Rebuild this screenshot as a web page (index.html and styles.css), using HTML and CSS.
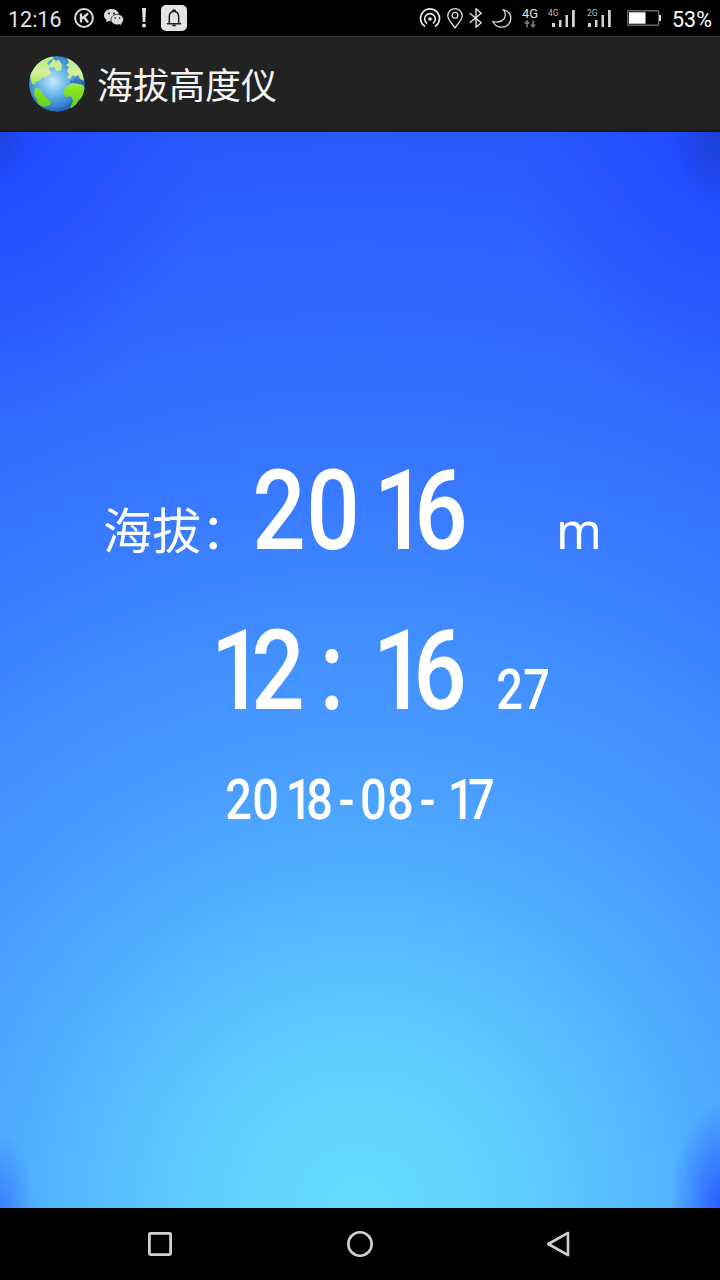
FILE: index.html
```html
<!DOCTYPE html>
<html lang="zh-CN">

<head>
    <meta charset="UTF-8">
    <meta name="viewport" content="width=device-width, initial-scale=1.0">
    <title>海拔高度仪</title>
    <link rel="stylesheet" href="styles.css">
</head>

<body>
    <div class="status">
        <span class="clock">12:16</span>
        <svg class="ic-k" width="20" height="20" viewBox="0 0 20 20" fill="none" stroke="#d8d8d8">
            <circle cx="10" cy="10" r="8.9" stroke-width="2" />
            <path d="M7 5.5v9M14 5.5L8 10.5M10 9l4 5.5" stroke-width="2.4" />
        </svg>
        <svg class="ic-chat" width="20" height="18" viewBox="0 0 20 18">
            <path d="M7.5 0C3.400 0 0 2.700 0 6.200c0 2 1 3.700 2.700 4.800L2 13.300l2.700-1.400c.9.300 1.800.4 2.800.4 4.200 0 7.500-2.700 7.500-6.100S11.700 0 7.500 0z" fill="#dcdcdc" />
            <path d="M13.300 5.300c-3.600 0-6.300 2.400-6.300 5.300s2.700 5.300 6.300 5.300c.8 0 1.500-.1 2.200-.3l2.300 1.300-.6-2c1.400-1 2.300-2.500 2.300-4.300 0-2.900-2.600-5.300-6.200-5.300z" fill="#dcdcdc" stroke="#000" stroke-width=".7" />
            <g fill="#000">
                <circle cx="5" cy="4.500" r=".9" />
                <circle cx="10" cy="4.500" r=".9" />
                <circle cx="11.200" cy="9" r=".8" />
                <circle cx="15.500" cy="9" r=".8" />
            </g>
        </svg>
        <svg class="ic-alert" width="6" height="20" viewBox="0 0 6 20" fill="#e4e4e4">
            <path d="M1 0h4l-.7 14H1.700z" />
            <circle cx="3" cy="17.500" r="2" />
        </svg>
        <svg class="ic-bell" width="26" height="26" viewBox="0 0 26 26">
            <rect width="26" height="26" rx="5" fill="#e4e4e4" />
            <path d="M6.500 18.800h13M8.300 18.500V12c0-3.800 1.900-5.500 4.700-5.500s4.700 1.700 4.700 5.500v6.500M11.500 6.300c0-1.600 3-1.600 3 0M11.800 20.500h2.400" fill="none" stroke="#222" stroke-width="1.500" stroke-linecap="round" />
        </svg>

        <svg class="ic-hotspot" width="22" height="20" viewBox="0 0 22 20" fill="none" stroke="#e6e6e6" stroke-width="1.600">
            <circle cx="11" cy="11" r="1.800" fill="#e6e6e6" stroke="none" />
            <path d="M8 15.500a5.400 5.400 0 1 1 6 0M6 18.500a9.500 9.500 0 1 1 10 0" />
        </svg>
        <svg class="ic-pin" width="16" height="21" viewBox="0 0 16 21" fill="none" stroke="#dedede" stroke-width="1.300">
            <path d="M8 19.800C5 15.500.8 11.500.8 7.700a7.200 7 0 0 1 14.400 0C15.200 11.500 11 15.500 8 19.800z" />
            <circle cx="8" cy="7.200" r="2.900" />
        </svg>
        <svg class="ic-bt" width="14" height="20" viewBox="0 0 14 20" fill="none" stroke="#e0e0e0" stroke-width="1.400">
            <path d="M.8 5.200l11.400 9.600L7 19.200V.8l5.200 4.400L.8 14.800" />
        </svg>
        <svg class="ic-moon" width="20" height="19" viewBox="0 0 20 19" fill="none" stroke="#dcdcdc" stroke-width="1.300">
            <path d="M11.500.9c4.500 1 7.300 4.500 7.300 8.600 0 5-4 8.700-9 8.700-4 0-7.500-2.200-8.800-5.700 6 1.900 12.700-1 12.200-7.500C13.100 3.500 12.500 2.200 11.500.9z" />
        </svg>
        <div class="net">
            <span>4G</span>
            <svg width="12" height="8" viewBox="0 0 12 8" fill="none" stroke="#777" stroke-width="1.600">
                <path d="M3 7.500V1.500M.8 3.500L3 1.200l2.200 2.300M9 .5v6M6.800 4.500L9 6.800l2.200-2.300" />
            </svg>
        </div>
        <div class="signal">
            <span>4G</span>
            <svg width="23" height="18" viewBox="0 0 23 18" fill="#d0d0d0">
                <path d="M0 14h3v4H0zM7 11h2.500v7H7zM13.500 6H16v12h-2.500zM20 1h2.800v17H20z" />
            </svg>
        </div>
        <div class="signal second">
            <span>2G</span>
            <svg width="23" height="18" viewBox="0 0 23 18" fill="#d0d0d0">
                <path d="M0 14h3v4H0zM7 11h2.500v7H7zM13.500 6H16v12h-2.500zM20 1h2.800v17H20z" />
            </svg>
        </div>
        <svg class="ic-battery" width="34" height="16" viewBox="0 0 34 16">
            <rect x=".7" y=".7" width="31" height="14.600" rx="1" fill="none" stroke="#666" stroke-width="1.400" />
            <rect x="2" y="2.300" width="16.500" height="11.400" fill="#fff" />
            <rect x="32" y="5" width="2" height="6" fill="#ddd" />
        </svg>
        <span class="percent">53%</span>
    </div>

    <div class="header">
        <svg class="globe" width="56" height="56" viewBox="0 0 56 56">
            <defs>
                <radialGradient id="sea" cx="43%" cy="45%" r="60%">
                    <stop offset="0" stop-color="#c5e8fa" />
                    <stop offset=".4" stop-color="#6db9ed" />
                    <stop offset=".75" stop-color="#3a85cf" />
                    <stop offset="1" stop-color="#1450a4" />
                </radialGradient>
                <linearGradient id="land" x1="0" y1="0" x2="0" y2="56" gradientUnits="userSpaceOnUse">
                    <stop offset="0" stop-color="#b9ee7c" />
                    <stop offset=".3" stop-color="#d5f0a0" />
                    <stop offset=".6" stop-color="#86e324" />
                    <stop offset="1" stop-color="#60ce10" />
                </linearGradient>
                <clipPath id="ball">
                    <circle cx="28" cy="28" r="28" />
                </clipPath>
            </defs>
            <g clip-path="url(#ball)">
                <circle cx="28" cy="28" r="28" fill="url(#sea)" />
                <g fill="url(#land)">
                    <path d="M3 28L0 16 10 4 22 0l3 2-5 3-2 3 3 2-1 4 3 3-4 3-3 2-2-1-4 4-3 1-1 3-2-1z" />
                    <path d="M24 3l3 2 3-1 3 5-1 5-4 1-3-4-3 1-2-4 2-1z" />
                    <path d="M38 2c7 3 12 8 15 14l2 9-4-2-2-4-3 2-2-2-3 4-3-1 2-4-2-3 2-4-3-2 3-2z" />
                    <path d="M6 32l6 1 2 6 8 7-1 3-6 2-6-3-1-5-3-4z" />
                    <path d="M38 30l5-3 6 1 5 1 2 3-2 9-5 4-3 6-4 2-1-1 3-7-2-5-5 1-3-4 1-4z" />
                </g>
                <path d="M41 24l3 1 3-3 2 3 5 1-2 2-4-1-6 0z" fill="#3374b8" />
            </g>
        </svg>
        <h1>海拔高度仪</h1>
    </div>

    <div class="main">
        <div class="row altitude">
            <span class="label">海拔：</span>
            <div class="digits">
                <span>2</span><span>0</span><span class="one">1</span><span>6</span>
            </div>
            <span class="unit">m</span>
        </div>
        <div class="row time">
            <div class="digits">
                <span class="one">1</span><span>2</span><span class="colon">:</span><span class="one">1</span><span>6</span>
            </div>
            <div class="digits small">
                <span>2</span><span>7</span>
            </div>
        </div>
        <div class="row date">
            <div class="digits small">
                <span>2</span><span>0</span><span class="one">1</span><span>8</span><span class="dash">-</span><span>0</span><span>8</span><span class="dash">-</span><span class="one">1</span><span>7</span>
            </div>
        </div>
    </div>

    <div class="nav">
        <svg width="28" height="28" viewBox="0 0 28 28" fill="none" stroke="#cfcfcf" stroke-width="2.800">
            <rect x="3.400" y="3.400" width="21.200" height="21.200" rx="1" />
        </svg>
        <svg width="28" height="28" viewBox="0 0 28 28" fill="none" stroke="#cfcfcf" stroke-width="2.600">
            <circle cx="14" cy="14" r="11.700" />
        </svg>
        <svg width="28" height="28" viewBox="0 0 28 28" fill="none" stroke="#cfcfcf" stroke-width="2.600" stroke-linejoin="round">
            <path d="M22 2.800v22.400L2.300 14z" />
        </svg>
    </div>
</body>

</html>
```
FILE: styles.css
```css
* {
    margin: 0;
    padding: 0;
    box-sizing: border-box;
}

body {
    width: 720px;
    height: 1280px;
    display: flex;
    flex-direction: column;
    background-color: black;
    color: white;
    font-family: Roboto, "Noto Sans CJK SC", sans-serif;
    overflow: hidden;
}

svg {
    display: block;
    flex: none;
}

/* status bar */
.status {
    height: 36px;
    display: flex;
    align-items: center;
    padding-left: 8px;
    flex: none;
}

.clock {
    width: 66px;
    font-size: 21.5px;
    line-height: 36px;
    padding-top: 3px;
    color: #e4e4e4;
}

.ic-k {
    margin-right: 10px;
}

.ic-chat {
    margin-right: 17px;
}

.ic-alert {
    margin-right: 14px;
}

.ic-hotspot {
    margin-left: 232px;
    margin-right: 6px;
}

.ic-pin {
    margin-right: 6px;
}

.ic-bt {
    margin-right: 9px;
}

.ic-moon {
    margin-right: 9px;
}

.net {
    width: 18px;
    display: flex;
    flex-direction: column;
    align-items: center;
    font-size: 13px;
    line-height: 12px;
    color: #e0e0e0;
    margin-right: 9px;
}

.signal {
    display: flex;
    align-items: flex-start;
    width: 37px;
    color: #bbb;
    font-size: 8.5px;
    line-height: 8px;
}

.signal span {
    width: 4px;
    white-space: nowrap;
}

.second {
    margin-left: 2px;
}

.second span {
    width: 1px;
}

.ic-battery {
    margin-left: 3px;
    margin-right: 11px;
}

.percent {
    font-size: 21.5px;
    line-height: 36px;
    padding-top: 3px;
}

/* title bar */
.header {
    height: 96px;
    flex: none;
    display: flex;
    align-items: center;
    padding-top: 2px;
    padding-left: 29px;
    background-color: #222;
    border-top: 1px solid #333;
    border-bottom: 3px solid #1b1b1b;
}

h1 {
    margin-left: 12px;
    margin-bottom: 3px;
    font-family: "Noto Sans CJK SC", sans-serif;
    font-size: 36px;
    font-weight: 400;
    line-height: 52px;
    color: #f3f3f3;
}

/* readings */
.main {
    height: 1076px;
    flex: none;
    padding-top: 324px;
    background-image:
        radial-gradient(35px 75px at 0 100%, rgba(35, 85, 255, 0.5), rgba(35, 85, 255, 0)),
        radial-gradient(50px 105px at 100% 100%, rgba(24, 60, 255, 0.7), rgba(24, 60, 255, 0)),
        radial-gradient(30px 50px at 0 0, rgba(28, 65, 200, 0.6), rgba(28, 65, 200, 0)),
        radial-gradient(50px 75px at 100% 0, rgba(28, 60, 190, 0.7), rgba(28, 60, 190, 0)),
        radial-gradient(200px 300px at 0 0, rgba(26, 60, 255, 0.55), rgba(26, 60, 255, 0)),
        radial-gradient(200px 300px at 100% 0, rgba(26, 60, 255, 0.55), rgba(26, 60, 255, 0)),
        radial-gradient(circle at 50% 100%, #66dbff 0, #63d5ff 100px, #5bc6ff 208px, #52b2ff 320px, #4a9fff 430px, #4290ff 560px, #397bff 710px, #3068ff 900px, #295aff 1076px, #2654ff 1140px);
}

.row {
    display: flex;
    align-items: baseline;
    height: 160px;
}

.altitude {
    padding-left: 103px;
}

.label {
    width: 149px;
    font-family: "Noto Sans CJK SC", sans-serif;
    font-size: 49px;
    font-weight: 400;
    line-height: 60px;
    white-space: nowrap;
}

.unit {
    margin-left: 88px;
    font-family: "Noto Sans", sans-serif;
    font-size: 49px;
    line-height: 60px;
}

.digits {
    display: flex;
    width: 216px;
    font-size: 112px;
    font-weight: 500;
    line-height: 110px;
    transform: scaleX(0.84);
    transform-origin: left;
}

.digits span {
    flex: none;
    width: 64.3px;
    text-align: center;
}

.digits .one {
    text-align: right;
    letter-spacing: -0.14em;
}

.digits.small {
    width: 54px;
    font-size: 56px;
    line-height: 55px;
}

.digits.small span {
    width: 32.15px;
}

.time {
    height: 157px;
    padding-left: 197px;
}

.time .small {
    margin-left: 83px;
}

.date {
    padding-left: 225px;
}

/* bottom keys */
.nav {
    height: 72px;
    flex: none;
    display: flex;
    justify-content: center;
    align-items: center;
    gap: 172px;
    background-color: black;
}
```
